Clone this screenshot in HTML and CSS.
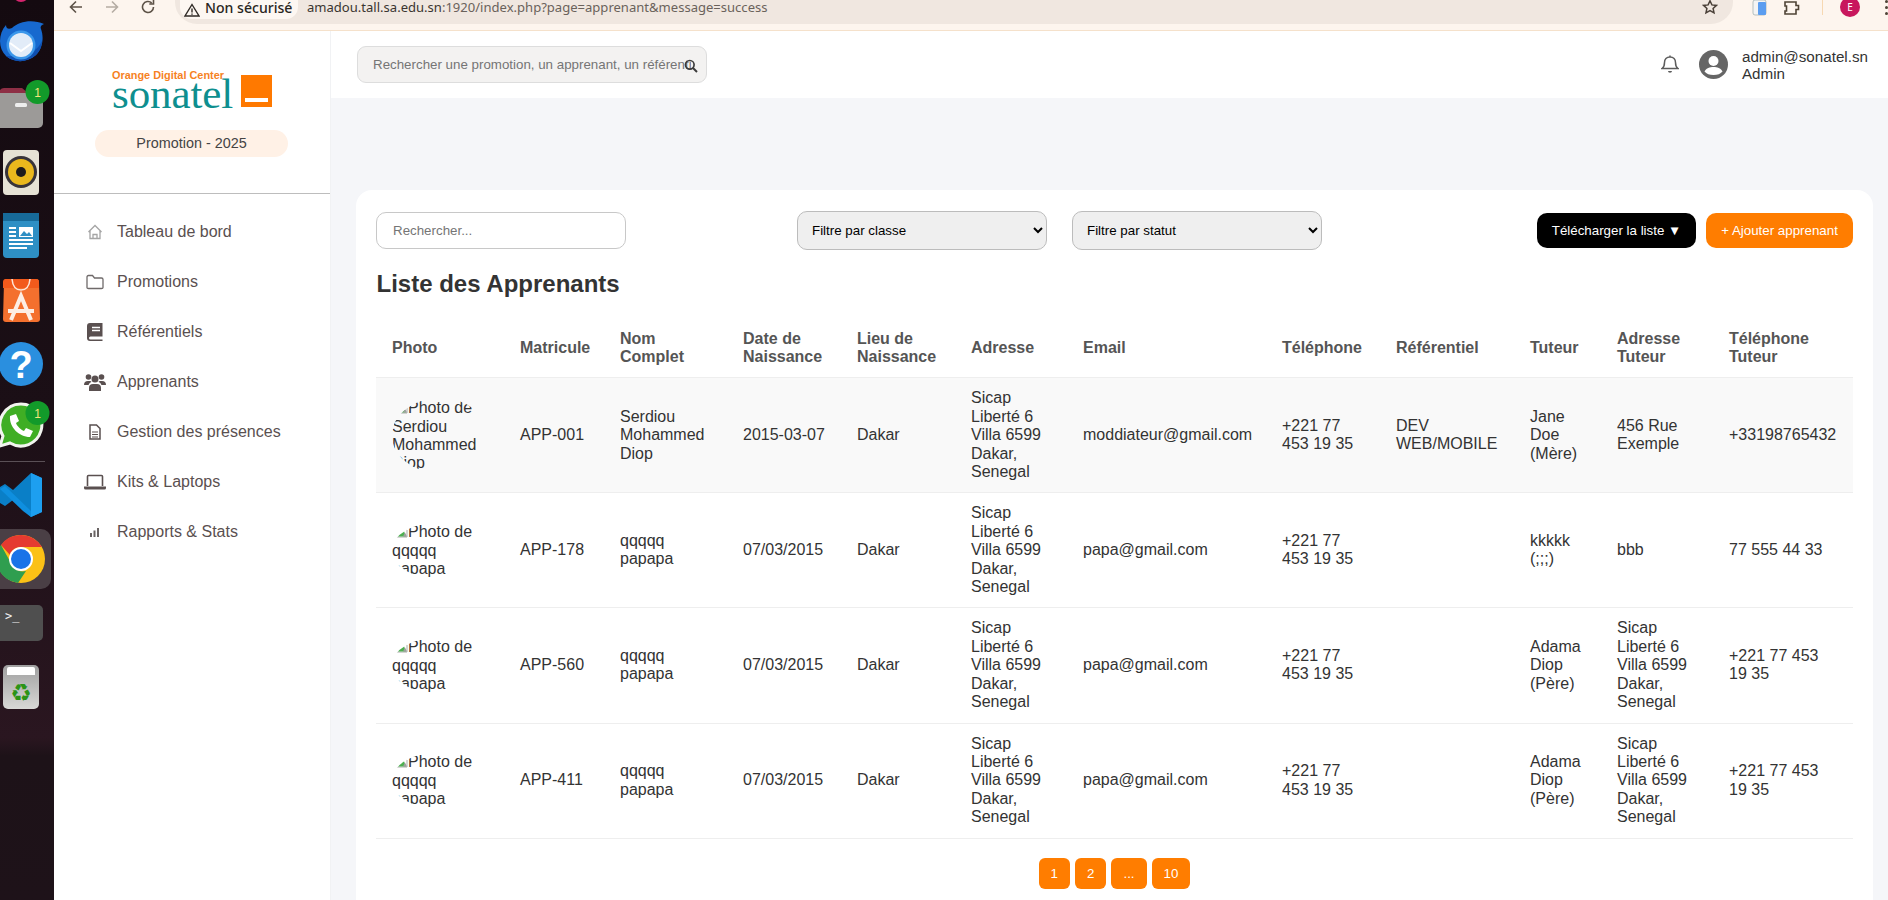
FILE: index.html
```html
<!DOCTYPE html>
<html lang="fr">
<head>
<meta charset="utf-8">
<title>Liste des Apprenants</title>
<link rel="stylesheet" href="styles.css">
</head>
<body>
<svg class="defs" width="0" height="0" aria-hidden="true">
  <symbol id="broken" viewBox="0 0 16 16">
    <path d="M1 15V3h9l5 5v7z" fill="#fff" stroke="#a9a9a9"/>
    <path d="M2 14.500l9-8 3 8z" fill="#4caf50"/>
    <path d="M11 14.500l2-4 2 4z" fill="#9e9e9e"/>
  </symbol>
</svg>
<div class="screen">
  <aside class="dock">
    <svg class="dock-ic" width="54" height="16"><circle cx="21" cy="-6" r="8" fill="#d6246e"/></svg>
    <svg class="dock-ic" width="54" height="59" viewBox="0 0 54 59"><path d="M12 12C19 5 33 3 44 8c-3 1-4 3-3 5 3 8 2 19-5 26-9 8-22 8-30 1C-2 32-2 18 6 9c0 3 2 5 6 3z" fill="#1769cf"/><path d="M6 40c8 7 21 7 30-1 4-4 6-9 6-14-5 10-14 17-36 15z" fill="#0f4fb0"/><circle cx="21" cy="29" r="14.500" fill="#3b97ea"/><circle cx="21" cy="29" r="12" fill="#e2ecf8"/><path d="M10 27l11 8 11-8" fill="none" stroke="#fff" stroke-width="2"/></svg>
    <svg class="dock-ic" width="54" height="65" viewBox="0 0 54 65"><path d="M-2 24q0-11 6-11h18l6 5v8H-2z" fill="#8e2f45"/><rect x="-4" y="18" width="47" height="35" rx="5" fill="#9c9a98"/><rect x="15" y="28" width="12" height="4" rx="1.500" fill="#eee"/><circle cx="37.500" cy="17" r="12" fill="#129a2a"/><text class="badge" x="37.500" y="22">1</text></svg>
    <svg class="dock-ic" width="54" height="67" viewBox="0 0 54 67"><rect x="3" y="10" width="36" height="45" rx="4" fill="#e6e2d5"/><circle cx="21" cy="32" r="16" fill="#38343a"/><circle cx="21" cy="32" r="13" fill="#eab81d"/><circle cx="21" cy="32" r="5" fill="#1d1b1c"/></svg>
    <svg class="dock-ic" width="54" height="63" viewBox="0 0 54 63"><path d="M7 6h24l8 8v33q0 4-4 4H7q-4 0-4-4V10q0-4 4-4z" fill="#2e8fc4"/><path d="M3 6h36v8H3z" fill="#176a99"/><path d="M9 21h7M9 25h7M9 29h7M9 33h24M9 37h24M9 41h18" stroke="#fff" stroke-width="2"/><rect x="19" y="20" width="14" height="10" fill="#fff"/><path d="M20 29l4-5 3 3 2-2 3 4z" fill="#2e8fc4"/></svg>
    <svg class="dock-ic" width="54" height="65" viewBox="0 0 54 65"><path d="M6 9h30q3 0 3 3l1 37q0 3-3 3H6q-3 0-3-3l1-37q0-3 2-3z" fill="#f4702e"/><path d="M3 12q0-3 3-3h30q3 0 3 3v6H3z" fill="#f25a1c"/><path d="M12 9q1 11 9 11t9-11" fill="none" stroke="#fde6d8" stroke-width="1.500"/><path d="M11 50l10-24 10 24M8 41h26" fill="none" stroke="#fdeee4" stroke-width="4"/></svg>
    <svg class="dock-ic" width="54" height="63" viewBox="0 0 54 63"><circle cx="21" cy="29" r="22" fill="#2a8fdf"/><text class="help" x="21" y="43">?</text></svg>
    <svg class="dock-ic" width="54" height="60" viewBox="0 0 54 60"><path d="M21 6a21 21 0 1 1-11 39l-10 3 3-10A21 21 0 0 1 21 6z" fill="#3fae24" stroke="#f2f4ef" stroke-width="3"/><path d="M10 18c-1 11 9 21 20 21l3-6-7-3-2 3c-3-1-7-5-8-8l3-2-3-7z" fill="#fff"/><circle cx="37.500" cy="15" r="12" fill="#129a2a"/><text class="badge" x="37.500" y="20">1</text></svg>
    <div class="dock-sep"></div>
    <svg class="dock-ic" width="54" height="60" viewBox="0 0 54 60"><path d="M31 8l11 5v34l-11 5-18-17-8 6-5-3v-16l5-3 8 6z" fill="#0a7fc7"/><path d="M31 8l11 5v34l-11 5z" fill="#1d9ff0"/><path d="M0 24l5-3 26 25v6l-8-6z" fill="#0f8fdf"/></svg>
    <div class="dock-chrome"><svg width="54" height="60" viewBox="0 0 54 60"><circle cx="21" cy="30" r="24" fill="#fbc116"/><path d="M21 6a24 24 0 0 1 21 12H21a12 12 0 0 0-11 8L1 16A24 24 0 0 1 21 6z" fill="#e53a30"/><path d="M1 16l11 20a12 12 0 0 0 14 6L18 54A24 24 0 0 1 1 16z" fill="#2f9e4f"/><circle cx="21" cy="30" r="12" fill="#fff"/><circle cx="21" cy="30" r="10" fill="#1a73e8"/></svg></div>
    <div class="dock-term"><span class="term-text">&gt;_</span></div>
    <div class="dock-trash"><span class="trash-lid"></span><span class="trash-glyph">♻</span></div>
  </aside>

  <div class="browser">
    <div class="toolbar">
      <div class="nav-btns">
        <svg class="tb-ic" width="18" height="18" viewBox="0 0 18 18"><path d="M15 9H4M9 3.500L3.500 9 9 14.500" fill="none" stroke="#5d5247" stroke-width="1.600"/></svg>
        <svg class="tb-ic" width="18" height="18" viewBox="0 0 18 18"><path d="M3 9h11M9 3.500L14.500 9 9 14.500" fill="none" stroke="#b5aca3" stroke-width="1.600"/></svg>
        <svg class="tb-ic" width="18" height="18" viewBox="0 0 18 18"><path d="M14.500 9a5.500 5.500 0 1 1-1.800-4.100M14.500 1.800v4.200h-4.200" fill="none" stroke="#5d5247" stroke-width="1.600"/></svg>
      </div>
      <div class="omnibox">
        <div class="chip">
          <svg width="16" height="14" viewBox="0 0 16 14"><path d="M8 1.500L15 13H1zM8 5.500v4M8 10.500v1.200" fill="none" stroke="#2f2a26" stroke-width="1.400"/></svg>
          <span class="chip-text">Non sécurisé</span>
        </div>
        <span class="url"><span class="url-host">amadou.tall.sa.edu.sn</span>:1920/index.php?page=apprenant&amp;message=success</span>
        <svg class="star" width="16" height="16" viewBox="0 0 16 16"><path d="M8 1.800l1.900 4.100 4.500.5-3.300 3 .9 4.400L8 11.600l-4 2.200.9-4.400-3.300-3 4.500-.5z" fill="none" stroke="#4a4038" stroke-width="1.500"/></svg>
      </div>
      <svg class="tb-app" width="16" height="16" viewBox="0 0 16 16"><rect x="1" y="0" width="13" height="15" rx="2" fill="#f4f4f4" stroke="#9aa" stroke-width=".7"/><rect x="6" y="2" width="8" height="13" rx="1" fill="#5b9df0"/></svg>
      <svg class="tb-ext" width="18" height="16" viewBox="0 0 18 16"><path d="M2 2h11v3.500h2.500v4H13V14H2v-3h1.500V6H2z" fill="none" stroke="#4f4436" stroke-width="1.600"/></svg>
      <span class="tb-sep"></span>
      <span class="tb-avatar">E</span>
      <span class="tb-dots"><i></i><i></i><i></i></span>
    </div>

    <div class="workspace">
      <nav class="sidebar">
        <div class="brand">
          <div class="logo">
            <div class="logo-words">
              <span class="logo-odc">Orange Digital Center</span>
              <span class="logo-name">sonatel</span>
            </div>
            <span class="logo-square"><i></i></span>
          </div>
          <div class="promo">Promotion - 2025</div>
        </div>
        <ul class="menu">
          <li class="menu-item"><span class="menu-ic"><svg width="16" height="16" viewBox="0 0 16 16"><path d="M1.500 8L8 1.500 14.500 8M3 7v7.500h10V7M6 14.500v-4h4v4" fill="none" stroke="#a5a5a5" stroke-width="1.300"/></svg></span>Tableau de bord</li>
          <li class="menu-item"><span class="menu-ic"><svg width="18" height="16" viewBox="0 0 18 16"><path d="M1 3q0-1.500 1.500-1.500h4l2 2.500h7q1.500 0 1.500 1.500v8q0 1-1.500 1h-13Q1 14.500 1 13.500z" fill="none" stroke="#6f6a6a" stroke-width="1.300"/></svg></span>Promotions</li>
          <li class="menu-item"><span class="menu-ic"><svg width="16" height="18" viewBox="0 0 16 18"><path d="M3 0h12.500v13.500H3.500a1.500 1.500 0 0 0 0 3h12V18H3q-3 0-3-3V3q0-3 3-3z" fill="#5a5050"/><path d="M5 4.500h8M5 7.500h8" stroke="#fff" stroke-width="1.300"/></svg></span>Référentiels</li>
          <li class="menu-item"><span class="menu-ic"><svg width="22" height="18" viewBox="0 0 22 18"><g fill="#5a5050"><circle cx="4.500" cy="4" r="2.800"/><circle cx="17.500" cy="4" r="2.800"/><circle cx="11" cy="6" r="3.500"/><path d="M0 12q0-4 4-4h2q1 0 1.500.8Q5 10 4.500 12zM22 12q0-4-4-4h-2q-1 0-1.500.8 2.500 1.200 3 3.200z"/><path d="M5 18v-3q0-4 4-4h4q4 0 4 4v3z"/></g></svg></span>Apprenants</li>
          <li class="menu-item"><span class="menu-ic"><svg width="12" height="16" viewBox="0 0 12 16"><path d="M1 1h6.500L11 4.500V15H1z" fill="none" stroke="#5a5050" stroke-width="1.500"/><path d="M3 8h6M3 10.500h6M3 13h6" stroke="#5a5050" stroke-width="1.200"/></svg></span>Gestion des présences</li>
          <li class="menu-item"><span class="menu-ic"><svg width="22" height="16" viewBox="0 0 22 16"><path d="M3.500 12V2.500q0-1 1-1h13q1 0 1 1V12" fill="none" stroke="#5a5050" stroke-width="1.600"/><path d="M0 12.500h22V14q0 1.500-1.500 1.500h-19Q0 15.500 0 14z" fill="#5a5050"/></svg></span>Kits &amp; Laptops</li>
          <li class="menu-item"><span class="menu-ic"><svg width="10" height="10" viewBox="0 0 10 10"><path d="M0 6h2v4H0zM3.500 3.500h2V10h-2zM7 1h2v9H7z" fill="#6a6464"/></svg></span>Rapports &amp; Stats</li>
        </ul>
      </nav>

      <div class="content">
        <header class="topbar">
          <div class="global-search">
            <input class="global-input" type="text" placeholder="Rechercher une promotion, un apprenant, un référentiel...">
            <svg class="global-ic" width="14" height="14" viewBox="0 0 14 14"><circle cx="5.800" cy="5.800" r="4.300" fill="none" stroke="#3b3b3b" stroke-width="1.700"/><path d="M9 9l4 4" stroke="#3b3b3b" stroke-width="2"/></svg>
          </div>
          <div class="user-area">
            <svg class="bell" width="18" height="21" viewBox="0 0 18 20"><path d="M9 2.500c-3.500 0-5.500 2.500-5.500 5.500 0 3-1 5-2.500 6h16c-1.500-1-2.500-3-2.500-6 0-3-2-5.500-5.500-5.500zM9 1v1.500" fill="none" stroke="#5c5c5c" stroke-width="1.500"/><path d="M7 16.500h4q0 1.800-2 1.800t-2-1.800z" fill="#5c5c5c"/></svg>
            <svg class="avatar" width="29" height="29" viewBox="0 0 29 29"><circle cx="14.500" cy="14.500" r="14.500" fill="#666"/><circle cx="14.500" cy="11" r="5" fill="#fff"/><path d="M5.500 21.500c2-3.500 5-4.500 9-4.500s7 1 9 4.500c-2 2.500-5 3.500-9 3.500s-7-1-9-3.500z" fill="#fff"/></svg>
            <div class="user-text"><div>admin@sonatel.sn</div><div>Admin</div></div>
          </div>
        </header>

        <main class="main">
          <section class="card">
            <div class="controls">
              <input class="search" type="text" placeholder="Rechercher...">
              <div class="filters">
                <select class="filter"><option>Filtre par classe</option></select>
                <select class="filter"><option>Filtre par statut</option></select>
              </div>
              <div class="actions">
                <button class="btn btn-black">Télécharger la liste ▼</button>
                <button class="btn btn-orange">+ Ajouter apprenant</button>
              </div>
            </div>
            <h2 class="title">Liste des Apprenants</h2>
            <table class="table">
              <colgroup>
                <col class="c-photo"><col class="c-mat"><col class="c-nom"><col class="c-date"><col class="c-lieu"><col class="c-adr"><col class="c-mail"><col class="c-tel"><col class="c-ref"><col class="c-tut"><col class="c-adr2"><col class="c-tel2">
              </colgroup>
              <thead>
                <tr><th>Photo</th><th>Matricule</th><th>Nom Complet</th><th>Date de Naissance</th><th>Lieu de Naissance</th><th>Adresse</th><th>Email</th><th>Téléphone</th><th>Référentiel</th><th>Tuteur</th><th>Adresse Tuteur</th><th>Téléphone Tuteur</th></tr>
              </thead>
              <tbody>
                <tr class="row-first">
                  <td><div class="photo"><svg class="broken" width="16" height="16"><use href="#broken"/></svg>Photo de Serdiou Mohammed Diop</div></td>
                  <td>APP-001</td><td>Serdiou Mohammed Diop</td><td>2015-03-07</td><td>Dakar</td><td>Sicap Liberté 6 Villa 6599 Dakar, Senegal</td><td>moddiateur@gmail.com</td><td>+221 77 453 19 35</td><td>DEV WEB/MOBILE</td><td>Jane Doe (Mère)</td><td>456 Rue Exemple</td><td>+33198765432</td>
                </tr>
                <tr>
                  <td><div class="photo"><svg class="broken" width="16" height="16"><use href="#broken"/></svg>Photo de qqqqq papapa</div></td>
                  <td>APP-178</td><td>qqqqq papapa</td><td>07/03/2015</td><td>Dakar</td><td>Sicap Liberté 6 Villa 6599 Dakar, Senegal</td><td>papa@gmail.com</td><td>+221 77 453 19 35</td><td></td><td>kkkkk (;;;)</td><td>bbb</td><td>77 555 44 33</td>
                </tr>
                <tr>
                  <td><div class="photo"><svg class="broken" width="16" height="16"><use href="#broken"/></svg>Photo de qqqqq papapa</div></td>
                  <td>APP-560</td><td>qqqqq papapa</td><td>07/03/2015</td><td>Dakar</td><td>Sicap Liberté 6 Villa 6599 Dakar, Senegal</td><td>papa@gmail.com</td><td>+221 77 453 19 35</td><td></td><td>Adama Diop (Père)</td><td>Sicap Liberté 6 Villa 6599 Dakar, Senegal</td><td>+221 77 453 19 35</td>
                </tr>
                <tr>
                  <td><div class="photo"><svg class="broken" width="16" height="16"><use href="#broken"/></svg>Photo de qqqqq papapa</div></td>
                  <td>APP-411</td><td>qqqqq papapa</td><td>07/03/2015</td><td>Dakar</td><td>Sicap Liberté 6 Villa 6599 Dakar, Senegal</td><td>papa@gmail.com</td><td>+221 77 453 19 35</td><td></td><td>Adama Diop (Père)</td><td>Sicap Liberté 6 Villa 6599 Dakar, Senegal</td><td>+221 77 453 19 35</td>
                </tr>
              </tbody>
            </table>
            <div class="pagination">
              <button class="page">1</button>
              <button class="page">2</button>
              <button class="page">...</button>
              <button class="page">10</button>
            </div>
          </section>
        </main>
      </div>
    </div>
  </div>
</div>
</body>
</html>
```
FILE: styles.css
```css
* { box-sizing: border-box; }
html, body { margin: 0; height: 900px; overflow: hidden; }
body { font-family: "Liberation Sans", Arial, sans-serif; font-size: 16px; color: #333; background: #f5f6f9; }
.defs { position: absolute; }
.screen { display: flex; width: 1888px; height: 900px; overflow: hidden; }

/* Desktop dock */
.dock { width: 54px; flex: none; height: 900px; display: flex; flex-direction: column; background: linear-gradient(180deg, #140a10 0%, #1b0f16 45%, #2a1620 82%, #1d1218 84%, #1e1219 100%); overflow: hidden; }
.dock-ic { display: block; flex: none; overflow: hidden; }
.badge { font: 12px "Liberation Sans", sans-serif; fill: #f5e57a; text-anchor: middle; }
.help { font: bold 38px "Liberation Sans", sans-serif; fill: #fff; text-anchor: middle; }
.dock-sep { height: 4px; flex: none; width: 45px; border-top: 1px solid #5a5056; margin-top: 3px; }
.dock-chrome { flex: none; height: 60px; width: 51px; border-radius: 0 10px 10px 0; background: #4a3f45; margin-top: 4px; overflow: hidden; }
.dock-chrome svg { display: block; }
.dock-term { flex: none; width: 43px; height: 36px; margin-top: 16px; border-radius: 0 5px 5px 0; background: #4f4f4f; padding: 1px 0 0 5px; }
.term-text { font: 12px/14px "DejaVu Sans Mono", monospace; color: #f2f2f2; }
.dock-trash { flex: none; width: 36px; height: 44px; margin: 24px 0 0 3px; border-radius: 5px; background: linear-gradient(180deg, #9f9f9f, #d8d8d6); text-align: center; }
.trash-lid { display: block; height: 8px; margin: 2px 4px 0; background: #fff; border-radius: 2px 2px 0 0; }
.trash-glyph { display: block; font: 24px/26px "DejaVu Sans", sans-serif; color: #2b9416; margin-top: 5px; }

/* Browser */
.browser { flex: 1; min-width: 0; display: flex; flex-direction: column; }
.toolbar { height: 31px; flex: none; display: flex; align-items: flex-start; background: #fdf5ee; border-bottom: 1px solid #f5e1cb; overflow: hidden; }
.nav-btns { display: flex; gap: 18px; width: 121px; padding: 0 0 0 13px; margin-top: -2px; }
.tb-ic { display: block; }
.omnibox { width: 1558px; height: 24px; flex: none; display: flex; align-items: flex-start; background: #f0e7e0; border-radius: 0 0 22px 22px; padding-left: 5px; }
.chip { display: flex; align-items: center; gap: 5px; width: 118px; height: 19px; padding-left: 4px; background: #fdf7f2; border-radius: 0 0 12px 12px; }
.chip-text { font: 500 14.100px/18px "Noto Sans", sans-serif; color: #2a2622; position: relative; top: -2px; }
.url { margin-left: 9px; font: 13.050px/14px "Noto Sans", sans-serif; color: #6a625b; white-space: nowrap; }
.url-host { color: #3a3530; }
.star { margin: -1px 15px 0 auto; }
.tb-app { margin: 0 0 0 19px; }
.tb-ext { margin: 0 0 0 15px; }
.tb-sep { width: 1px; height: 15px; background: #f7d8b2; margin-left: 21px; }
.tb-avatar { width: 20px; height: 20px; margin: -3px 0 0 17px; border-radius: 50%; background: #c8175d; color: #fff; font: 10px/20px "Noto Sans", sans-serif; text-align: center; }
.tb-dots { display: flex; flex-direction: column; gap: 3px; margin: 0 0 0 25px; }
.tb-dots i { width: 3px; height: 3px; background: #4f4436; border-radius: 50%; }

.workspace { flex: 1; min-height: 0; display: flex; }

/* Sidebar */
.sidebar { width: 276px; flex: none; background: #fff; }
.brand { height: 163px; padding-top: 38px; border-bottom: 1px solid #bdbdbd; display: flex; flex-direction: column; align-items: center; }
.logo { display: flex; align-items: flex-end; gap: 8px; height: 38px; }
.logo-words { display: flex; flex-direction: column; width: 121px; }
.logo-odc { font: bold 10.900px/12px "Liberation Sans", sans-serif; color: #f6821f; white-space: nowrap; }
.logo-name { font: 43px/26px "Liberation Serif", serif; color: #0e8f8f; height: 26px; letter-spacing: -.1px; }
.logo-square { width: 31px; height: 32px; background: #ff7900; display: flex; align-items: flex-end; justify-content: center; padding-bottom: 5px; }
.logo-square i { display: block; width: 23px; height: 4px; background: #fff; }
.promo { width: 193px; height: 27px; margin: 23px 1px 0 0; border-radius: 14px; background: #fff1e6; text-align: center; font-size: 14.400px; line-height: 27px; color: #444; }
.menu { list-style: none; margin: 0; padding: 13px 0 0 30px; }
.menu-item { height: 50px; display: flex; align-items: center; color: #5a5050; }
.menu-ic { width: 22px; margin-right: 11px; display: flex; justify-content: center; flex: none; }
.menu-ic svg { display: block; }

/* Main column */
.content { flex: 1; min-width: 0; display: flex; flex-direction: column; border-left: 1px solid #f1f2f4; }
.topbar { height: 67px; flex: none; background: #fff; display: flex; align-items: center; justify-content: space-between; padding: 0 20px 0 26px; }
.global-search { position: relative; width: 350px; height: 37px; }
.global-input { width: 100%; height: 100%; border: 1px solid #ddd; border-radius: 9px; background: #f3f2f1; padding: 0 15px; font: 13.333px "Liberation Sans", sans-serif; outline: none; }
.global-input::placeholder { color: #757575; opacity: 1; }
.global-ic { position: absolute; right: 9px; top: 13px; }
.user-area { display: flex; align-items: center; }
.bell { margin-right: 20px; }
.avatar { margin-right: 14px; }
.user-text { font-size: 15.200px; line-height: 17px; color: #333; margin-top: 1px; }

.main { flex: 1; min-height: 0; padding: 92px 15px 0 25px; }
.card { background: #fff; border-radius: 16px; padding: 21px 20px 20px; height: 760px; }
.controls { display: flex; align-items: center; height: 39px; }
.search { width: 250px; height: 37px; border: 1px solid #c8c8c8; border-radius: 10px; padding: 0 16px; font: 13.333px "Liberation Sans", sans-serif; background: #fff; outline: none; }
.search::placeholder { color: #757575; opacity: 1; }
.filters { display: flex; gap: 25px; margin-left: 171px; }
.filter { width: 250px; height: 39px; border: 1px solid #bcbcbc; border-radius: 10px; background: #efefef; padding: 0 10px; font: 13.333px "Liberation Sans", sans-serif; color: #000; }
.actions { display: flex; gap: 10px; margin-left: auto; }
.btn { height: 35px; border: 0; border-radius: 10px; padding: 0; white-space: nowrap; font: 13.333px "Liberation Sans", sans-serif; color: #fff; }
.btn-black { background: #000; width: 159px; }
.btn-orange { background: #ff7d00; width: 147px; }
.title { margin: 20px 0 21px .5px; font-size: 24px; font-weight: bold; line-height: 27.600px; color: #333; }

/* Table */
.table { width: 1477px; table-layout: fixed; border-collapse: collapse; }
.c-photo { width: 128px; }
.c-mat { width: 100px; }
.c-nom { width: 123px; }
.c-date { width: 114px; }
.c-lieu { width: 114px; }
.c-adr { width: 112px; }
.c-mail { width: 199px; }
.c-tel { width: 114px; }
.c-ref { width: 134px; }
.c-tut { width: 87px; }
.c-adr2 { width: 112px; }
.c-tel2 { width: 140px; }
.table th, .table td { padding: 11px 16px; text-align: left; vertical-align: middle; border-bottom: 1px solid #eee; line-height: 18.400px; }
.table th { color: #555; font-weight: bold; }
.row-first td { background: #f9f9f9; }
.photo { width: 96px; border-radius: 50%; overflow: hidden; }
.broken { vertical-align: -1px; }

.pagination { display: flex; justify-content: center; gap: 5px; margin-top: 19px; }
.page { height: 31px; border: 0; border-radius: 6px; padding: 0 12px; background: #ff7d00; color: #fff; font: 13.333px "Liberation Sans", sans-serif; }
```
